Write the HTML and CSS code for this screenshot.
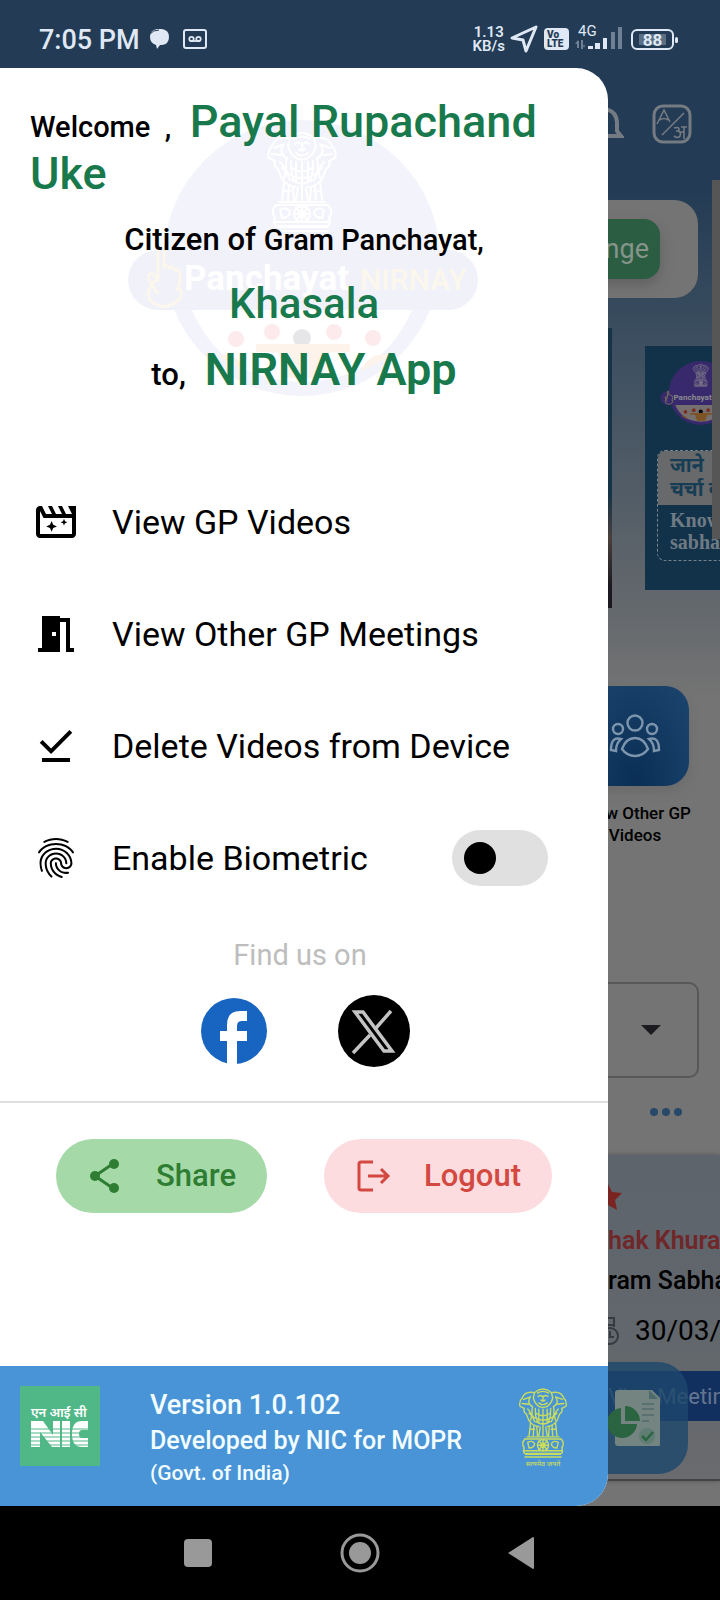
FILE: index.html
```html
<!DOCTYPE html>
<html lang="en">
<head>
<meta charset="utf-8">
<meta name="viewport" content="width=device-width, initial-scale=1">
<title>NIRNAY App</title>
<link rel="stylesheet" href="styles.css">
</head>
<body>
<svg class="defs" aria-hidden="true">
  <symbol id="emblem" viewBox="0 0 72 104">
    <g fill="none" stroke="currentColor" stroke-width="2" stroke-linecap="round">
      <path d="M24 8q12-10 24 0l2 8q-2 8-8 12q-6 3-12 0q-6-4-8-12zM28 9q8-5 16 0M29 14q3-3 6 0M37 14q3-3 6 0M33 19q3 3 6 0M30 23q6 5 12 0M36 13v6"/>
      <path d="M22 8q-12-2-16 8q-5 5-3 12l6 3q-2 5 3 8l4 10q6 8 14 8M50 8q12-2 16 8q5 5 3 12l-6 3q2 5-3 8l-4 10q-6 8-14 8"/>
      <path d="M8 18l8-3M6 24l9 1M18 14q-6 8 2 14M64 18l-8-3M66 24l-9 1M54 14q6 8-2 14M14 32q8 8 4 16M58 32q-8 8-4 16M21 28q-3 12 3 22M51 28q3 12-3 22M25 31q-1 10 3 20M47 31q1 10-3 20M30 32v20M42 32v20M36 32v24M26 38q10 7 20 0M23 44q13 8 26 0M26 50q10 7 20 0M16 38l6 5M56 38l-6 5"/>
      <path d="M18 52l-2 18M23 55l-1 15M27 57l1 13M32 58l-2 12M36 57v13M40 58l2 12M45 57l-1 13M49 55l1 15M54 52l2 18M18 61h6M48 61h6M13 72h46M10 75h52"/>
      <path d="M10 75q-6 6-1 13q-3 6 2 9h50q5-3 2-9q5-7-1-13M14 80q7-4 10 2q-1 6-8 6zM58 80q-7-4-10 2q1 6 8 6zM9 92h54M12 96h48M10 101h52"/>
      <circle cx="36" cy="84" r="8"/><circle cx="36" cy="84" r="3"/><path d="M36 76v16M28 84h16M30 78l12 12M42 78L30 90"/>
    </g>
  </symbol>
  <symbol id="app-logo" viewBox="0 0 350 276">
    <circle class="logo-disc" cx="174" cy="138" r="138"/>
    <path class="logo-bowl" d="M64 190h220q-30 70-110 72q-80-2-110-72z"/>
    <rect class="logo-pill" y="130" width="350" height="60" rx="30"/>
    <use class="logo-emblem" href="#emblem" x="137" y="10" width="74" height="104"/>
    <path class="logo-hand" d="M30 174l-9-14q-2-7 4-6l5 5v-28q3-5 6 0v16q3-3 5 1q4-2 6 2q5-1 5 4v8l-3 9M30 158q-14 12-8 22q13 13 29 0q4-4 1-12"/>
    <text class="logo-word" x="56" y="170">Panchayat</text>
    <text class="logo-name" x="232" y="170">NIRNAY</text>
    <g class="logo-people"><circle cx="108" cy="219" r="8"/><circle cx="144" cy="212" r="8"/><circle cx="206" cy="212" r="8"/><circle cx="245" cy="218" r="8"/></g>
    <circle class="logo-lead" cx="174" cy="218" r="9"/>
    <path class="logo-table" d="M128 224h94v8h-20l-8 26h-36l-8-26h-22zM90 236q18-6 28 16M262 236q-20-6-30 16"/>
  </symbol>
</svg>
<div class="phone">
  <header class="status">
    <span class="clock">7:05 PM</span>
    <svg class="chat-icon" viewBox="0 0 22 22"><path fill="currentColor" d="M9 1h5q7 1 7 8t-7 8h-2l-3 4-1-4Q2 15 2 9q0-7 7-8z"/><path d="M2 6q3-4 9-4" fill="none" stroke="#233b54" stroke-width="1"/></svg>
    <svg class="tape-icon" viewBox="0 0 24 22" fill="none" stroke="currentColor" stroke-width="2"><rect x="1" y="2" width="22" height="18" rx="2"/><g stroke-width="1.8"><circle cx="8.500" cy="11" r="2.200"/><circle cx="15.500" cy="11" r="2.200"/><path d="M8 13h8"/></g></svg>
    <span class="status-gap"></span>
    <span class="speed">1.13<br>KB/s</span>
    <svg class="nav-arrow" viewBox="0 0 28 28"><path d="M26 2L2 13l11 2 3 11z" fill="none" stroke="currentColor" stroke-width="3" stroke-linejoin="round"/></svg>
    <span class="volte">Vo<br>LTE</span>
    <span class="signal"><span class="net">4G</span>
      <svg viewBox="0 0 48 24"><g fill="currentColor"><path d="M13 20h5v3h-5zM20 17h5v6h-5zM28 12h4v11h-4z"/><path opacity=".4" d="M36 6h4v17h-4zM43 1h4v22h-4zM2 15h2v7H2zM0 18l3-4 1 4zM6 14h2v9H6zM10 19h-2l1 3z"/></g></svg></span>
    <span class="battery">88</span>
  </header>

  <div class="stage">
    <main class="page">
      <div class="appbar">
        <svg class="bell" viewBox="0 0 16 36" fill="none" stroke="currentColor" stroke-width="4"><path d="M-10 29V16Q-8 4 0 4q8 2 9 12v9l4 5h-26"/></svg>
        <svg class="lang" viewBox="0 0 40 40" fill="none" stroke="currentColor"><rect x="2" y="2" width="36" height="36" rx="9" stroke-width="3"/><path stroke-width="1.600" d="M10 31L32 9M5 20l7-14 6 12M8 16q4-3 8 0"/><path stroke-width="1.600" d="M22 24q6-2 5 3h-3q6 0 4 5-2 3-6 0M28 28h4M32 23v12M29 23h6"/></svg>
      </div>
      <div class="search-card"><button class="change">nge</button></div>
      <div class="carousel">
        <div class="slide-prev"></div>
        <div class="slide">
          <svg class="mini-logo" viewBox="0 0 350 276"><use href="#app-logo"/></svg>
          <div class="promo"><p class="promo-hi">जाने<br>चर्चा के</p><p class="promo-en">Know<br>sabha</p></div>
        </div>
      </div>
      <button class="tile" aria-label="View Other GP Videos">
        <svg viewBox="0 0 52 44" fill="none" stroke="currentColor" stroke-width="2.400"><circle cx="26" cy="9" r="7.500"/><circle cx="9" cy="15" r="5"/><circle cx="43" cy="15" r="5"/><path d="M26 24q9 0 13 11-5 7-13 7t-13-7q4-11 13-11zM12 25Q2 22 2 36l5 1q0-8 5-12zM40 25q10-3 10 11l-5 1q0-8-5-12z"/></svg>
      </button>
      <p class="tile-label">View Other GP<br>Videos</p>
      <button class="picker" aria-label="Choose meeting"><span class="caret"></span></button>
      <div class="dots"><i></i><i></i><i></i></div>
      <article class="meeting">
        <svg class="star" viewBox="0 0 14 28"><path fill="currentColor" d="M0 1l4 8 10 1-7 7 2 10-9-5z"/></svg>
        <p class="person">hak Khura</p>
        <p class="kind">ram Sabha</p>
        <p class="date"><svg viewBox="0 0 11 30" fill="none" stroke="currentColor" stroke-width="2"><path d="M0 2h6v9M0 9h6"/><circle cx="2" cy="20" r="8"/><path d="M2 15v6h4"/></svg><span>30/03/</span></p>
        <button class="view"><span>Vi</span><span>Meetin</span></button>
      </article>
      <div class="fab">
        <svg viewBox="0 0 52 58"><path d="M10 1h34l9 9v44q0 3-3 3H10q-3 0-3-3V4q0-3 3-3z" fill="#748481"/><path d="M41 1l9 9h-9z" fill="#4d6a6e"/><path d="M34 15h12M34 20h12M34 26h12M34 32h7" stroke="#5a7170" stroke-width="2"/><path d="M13 19v16h16a15 15 0 1 1-16-16z" fill="#2b6440"/><path d="M17 17a15 15 0 0 1 15 15H17z" fill="#2b6440"/><circle cx="39" cy="47" r="8" fill="#5f7d72"/><path d="M34 47l4 4 7-8" fill="none" stroke="#2b6440" stroke-width="2.500"/></svg>
      </div>
      <div class="scrollbar"></div>
    </main>

    <aside class="drawer">
      <section class="greeting">
        <svg class="watermark" viewBox="0 0 350 276" aria-hidden="true"><use href="#app-logo"/></svg>
        <h1 class="welcome"><span class="hello">Welcome&nbsp; ,&nbsp;</span> Payal Rupachand Uke</h1>
        <p class="citizen">Citizen of <span>Gram Panchayat,</span></p>
        <p class="village">Khasala</p>
        <p class="to-app"><span>to,&nbsp;</span> NIRNAY App</p>
      </section>
      <nav class="menu">
        <a class="row" href="#videos"><svg viewBox="0 0 24 24"><path d="M18 4l2 4h-3l-2-4h-2l2 4h-3l-2-4H8l2 4H7L5 4H4c-1.100 0-2 .9-2 2v12c0 1.100.9 2 2 2h16c1.100 0 2-.9 2-2V4h-4zm2 14H4V6.470L5.760 10H20v8zM9.800 11.500l.8 1.900 1.900.8-1.900.8-.8 1.900-.8-1.900-1.900-.8 1.900-.8zM16 10.400l.5 1.200 1.200.5-1.200.5-.5 1.200-.5-1.200-1.200-.5 1.200-.5z"/></svg>View GP Videos</a>
        <a class="row" href="#meetings"><svg viewBox="0 0 24 24"><path d="M14 6v15H3v-2h2V3h9v1h5v15h2v2h-4V6h-3zm-4 5v2h2v-2h-2z"/></svg>View Other GP Meetings</a>
        <a class="row" href="#delete"><svg viewBox="0 0 24 24"><path d="M20.130 5.410 18.720 4l-9.190 9.190-4.250-4.240-1.410 1.410 5.660 5.660zM5 18h14v2H5z"/></svg>Delete Videos from Device</a>
        <label class="row"><svg viewBox="0 0 24 24"><path d="M17.810 4.470c-.08 0-.16-.02-.23-.06C15.660 3.420 14 3 12.010 3c-1.980 0-3.860.47-5.570 1.410-.24.13-.54.04-.68-.2-.13-.24-.04-.55.2-.68C7.820 2.520 9.860 2 12.010 2c2.130 0 3.990.47 6.030 1.520.25.13.34.43.21.67-.09.18-.26.28-.44.28zM3.500 9.720c-.1 0-.2-.03-.29-.09-.23-.16-.28-.47-.12-.7.99-1.400 2.250-2.500 3.750-3.270C9.980 4.040 14 4.030 17.150 5.650c1.500.77 2.760 1.860 3.750 3.250.16.22.11.54-.12.7-.23.16-.54.11-.7-.12-.9-1.260-2.040-2.250-3.390-2.940-2.870-1.470-6.540-1.470-9.400.01-1.360.7-2.500 1.700-3.400 2.960-.08.14-.23.21-.39.21zm6.250 12.070c-.13 0-.26-.05-.35-.15-.87-.87-1.340-1.430-2.010-2.640-.69-1.230-1.050-2.730-1.050-4.340 0-2.970 2.540-5.390 5.660-5.390s5.660 2.420 5.660 5.390c0 .28-.22.5-.5.5s-.5-.22-.5-.5c0-2.420-2.090-4.390-4.660-4.390-2.570 0-4.660 1.970-4.660 4.390 0 1.440.32 2.770.93 3.850.64 1.150 1.080 1.640 1.850 2.420.19.2.19.51 0 .71-.11.1-.24.15-.37.15zm7.170-1.850c-1.190 0-2.240-.3-3.100-.89-1.490-1.010-2.380-2.650-2.380-4.390 0-.28.22-.5.5-.5s.5.22.5.5c0 1.410.72 2.740 1.940 3.560.71.48 1.540.71 2.540.71.24 0 .64-.03 1.040-.1.27-.05.53.13.58.41.05.27-.13.53-.41.58-.57.11-1.070.12-1.210.12zM14.910 22c-.04 0-.09-.01-.13-.02-1.590-.44-2.630-1.030-3.720-2.100-1.400-1.390-2.170-3.240-2.170-5.220 0-1.620 1.380-2.940 3.080-2.940 1.700 0 3.080 1.320 3.080 2.940 0 1.070.93 1.940 2.080 1.940s2.080-.87 2.080-1.940c0-3.770-3.250-6.830-7.250-6.830-2.840 0-5.440 1.580-6.610 4.030-.39.81-.59 1.760-.59 2.800 0 .78.07 2.010.67 3.610.1.26-.03.55-.29.64-.26.1-.55-.04-.64-.29-.49-1.310-.73-2.610-.73-3.960 0-1.200.23-2.290.68-3.240 1.330-2.790 4.280-4.600 7.510-4.600 4.550 0 8.250 3.510 8.250 7.830 0 1.620-1.380 2.940-3.080 2.940s-3.080-1.320-3.080-2.940c0-1.070-.93-1.940-2.080-1.940s-2.080.87-2.080 1.940c0 1.710.66 3.310 1.870 4.510.95.94 1.860 1.460 3.270 1.850.27.07.42.35.35.61-.05.23-.26.38-.47.38z"/></svg><span class="row-text">Enable Biometric</span><input class="switch" type="checkbox" role="switch"></label>
      </nav>
      <p class="find">Find us on</p>
      <div class="social">
        <a href="#facebook" aria-label="Facebook"><svg viewBox="0 0 72 72"><circle cx="36" cy="36" r="33" fill="#1765c0"/><path fill="#fff" d="M29 70V46h-7V36h7v-6q0-14 13-14h7v10h-5q-5 0-5 5v5h10v10H39v24z"/></svg></a>
        <a href="#x" aria-label="X"><svg viewBox="0 0 72 72"><circle cx="36" cy="36" r="36"/><g fill="none" stroke="#c4c4c4" stroke-width="3.500"><path d="M17 17h8l29 39h-8z"/><path d="M53 16L38 33M32 40L15 58"/></g></svg></a>
      </div>
      <hr class="rule">
      <div class="actions">
        <button class="pill share"><svg viewBox="0 0 36 36" fill="currentColor"><path d="M27 5L8 18l19 13" fill="none" stroke="currentColor" stroke-width="3"/><circle cx="27" cy="6" r="5"/><circle cx="8" cy="18" r="5"/><circle cx="27" cy="30" r="5"/></svg>Share</button>
        <button class="pill logout"><svg viewBox="0 0 36 36" fill="none" stroke="currentColor" stroke-width="3"><path d="M18 4H6q-2 0-2 2v24q0 2 2 2h12M13 18h20M26 11l7 7-7 7"/></svg>Logout</button>
      </div>
      <footer class="about">
        <svg class="nic" viewBox="0 0 80 80"><rect width="80" height="80" fill="#50b787"/><text x="11" y="31" class="nic-hi">एन आई सी</text><g fill="#fff"><path d="M11 35h12l10 14V35h7v26h-8L20 46v15h-9zM42 35h8v26h-8zM68 35v9h-6q-3 0-3 4t3 4h6v9h-6q-10 0-10-13t10-13z"/></g><path stroke="#50b787" stroke-width="1.200" d="M10 43h60M10 47h60M10 51h60M10 55h60M10 59h60"/></svg>
        <div class="about-text"><p class="version">Version 1.0.102</p><p class="dev">Developed by NIC for MOPR</p><p class="govt">(Govt. of India)</p></div>
        <div class="seal"><svg viewBox="0 0 72 104"><use href="#emblem"/></svg><span>सत्यमेव जयते</span></div>
      </footer>
    </aside>
  </div>

  <nav class="navbar">
    <button aria-label="Recent apps"><svg viewBox="0 0 40 40"><rect x="6" y="6" width="28" height="28" rx="4"/></svg></button>
    <button aria-label="Home"><svg viewBox="0 0 40 40"><circle cx="20" cy="20" r="11"/><circle cx="20" cy="20" r="18" fill="none" stroke="#999" stroke-width="3"/></svg></button>
    <button aria-label="Back"><svg viewBox="0 0 40 40"><path d="M6 20L31 4q1 0 1 1v30q0 1-1 1z"/></svg></button>
  </nav>
</div>
</body>
</html>
```
FILE: styles.css
```css
* { box-sizing: border-box; }
body { margin: 0; background: #000; font-family: Roboto, "Noto Sans", sans-serif; color: #000; }
h1, p, hr { margin: 0; }
button { border: 0; padding: 0; font: inherit; color: inherit; background: none; }
a { color: inherit; text-decoration: none; }
svg { display: block; flex: none; }
.defs { position: absolute; width: 0; height: 0; }

.phone { --drawer: min(608px, 85vw); min-height: 100vh; display: flex; flex-direction: column; overflow: hidden; }

.status { height: 68px; padding: 10px 46px 0 39px; display: flex; align-items: center; background: #233b54; color: #dfe8f4; }
.clock { font-size: 27px; font-weight: 500; line-height: 32px; padding-top: 2px; }
.chat-icon { width: 22px; height: 22px; margin-left: 8px; }
.tape-icon { width: 24px; height: 22px; margin-left: 13px; }
.status-gap { flex: 1; }
.speed { font-size: 15px; line-height: 14px; font-weight: 600; text-align: center; }
.nav-arrow { width: 28px; height: 28px; margin-left: 5px; }
.volte { margin-left: 6px; width: 25px; height: 22px; padding: 2px 3px; border-radius: 4px; background: #dfe8f4; color: #233b54; font-size: 10px; line-height: 9px; font-weight: 900; }
.signal { position: relative; margin-left: 6px; width: 48px; height: 26px; }
.signal svg { width: 48px; height: 24px; }
.net { position: absolute; top: -3px; left: 3px; font-size: 15px; line-height: 16px; }
.battery { position: relative; margin-left: 8px; width: 43px; height: 21px; border: 2px solid #dfe8f4; border-radius: 6px; font-size: 17px; line-height: 18px; font-weight: 700; text-align: center; background: linear-gradient(#5c7085, #5c7085) center / 27px 11px no-repeat; }
.battery::after { content: ""; position: absolute; right: -6px; top: 6px; width: 3px; height: 6px; border-radius: 2px; background: #dfe8f4; }

.stage { flex: 1; display: grid; }
.page, .drawer { grid-area: 1 / 1; min-width: 0; }

.page { position: relative; padding-left: var(--drawer); overflow: hidden; background: linear-gradient(#233b54 0, #233b54 120px, #3a4d5f 260px, #62676c 530px, #747474 630px); }
.appbar { height: 112px; padding: 0 28px 0 0; display: flex; align-items: center; justify-content: space-between; color: #747b82; }
.bell { width: 16px; height: 36px; }
.lang { width: 40px; height: 40px; }
.search-card { margin: 20px 22px 0 -60px; height: 98px; padding: 19px 38px; display: flex; justify-content: flex-end; border-radius: 24px; background: #747474; }
.change { width: 112px; height: 60px; padding-right: 11px; border-radius: 16px; background: #2b5d43; color: #85958a; font-size: 27px; text-align: right; box-shadow: 0 6px 12px #5559; }
.carousel { margin-top: 30px; height: 280px; display: flex; gap: 33px; }
.slide-prev { width: 4px; background: linear-gradient(#173347 60%, #4a403c 75%, #1c1a20 92%); }
.slide { flex: 1; min-width: 0; margin: 18px 0; padding: 15px 0 0 12px; background: #12324a; overflow: hidden; }
.mini-logo { width: 82px; height: 64px; margin-left: 3px; --disc: #37296c; --pill: #37296c; --bowl: #75706f; --ink: #8b8a90; --name: #8b8a50; --people: #7a2c20; --lead: #000; --table: #7d5425; }
.promo { margin-top: 25px; width: 160px; border: 1px dashed #77828a; border-radius: 8px; overflow: hidden; }
.promo p { padding-left: 12px; }
.promo-hi { height: 54px; padding-top: 2px; background: #68696b; color: #173d55; font: bold 20px/24px "Noto Sans", "Noto Sans Devanagari", sans-serif; }
.promo-en { height: 55px; padding-top: 4px; color: #6f7b84; font: bold 20px/22px "Liberation Serif", serif; }
.tile { margin: 78px 0 0 -27px; width: 108px; height: 100px; display: flex; align-items: center; justify-content: center; border-radius: 24px; background: radial-gradient(ellipse at 50% 100%, #0a2e56, #1c456d); color: #7c95ad; box-shadow: 0 6px 10px #6668; }
.tile svg { width: 52px; height: 44px; }
.tile-label { margin: 16px 0 0 -27px; width: 108px; text-align: center; font-size: 17px; line-height: 22px; font-weight: 500; white-space: nowrap; }
.picker { margin: 136px 21px 0 -300px; width: calc(100% + 279px); height: 96px; padding-right: 36px; display: flex; align-items: center; justify-content: flex-end; border: 2px solid #585858; border-radius: 10px; }
.caret { border: 10px solid transparent; border-top-color: #1c1b20; border-bottom: 0; }
.dots { margin: 30px 38px 0 0; display: flex; gap: 4px; justify-content: flex-end; }
.dots i { width: 8px; height: 8px; border-radius: 50%; background: #27486a; }
.meeting { margin: 39px 0 0 -200px; padding: 28px 0 58px 200px; background: linear-gradient(#5d646c, #62676c 60%, #6a6b6e); border-bottom: 2px solid #444; white-space: nowrap; box-shadow: 0 0 4px #555; }
.star { width: 14px; height: 28px; color: #7a2320; }
.person { margin-top: 14px; font-size: 25px; line-height: 32px; font-weight: 600; color: #70272a; }
.kind { margin-top: 8px; font-size: 25px; line-height: 32px; font-weight: 500; }
.date { margin-top: 14px; display: flex; align-items: center; gap: 16px; font-size: 28px; line-height: 40px; }
.date svg { width: 11px; height: 30px; color: #36393d; }
.view { margin-top: 20px; margin-left: -100px; padding-left: 100px; width: 320px; height: 50px; display: flex; align-items: center; gap: 30px; background: #12305f; color: #66758f; font-size: 22px; }
.fab { position: absolute; right: 32px; bottom: 32px; width: 112px; height: 112px; padding-right: 28px; display: flex; align-items: center; justify-content: flex-end; border-radius: 30px; background: #1d476dcc; }
.fab svg { width: 52px; height: 58px; }
.scrollbar { position: absolute; right: 0; top: 112px; width: 8px; height: 359px; background: #565656; }

.drawer { position: relative; width: var(--drawer); display: flex; flex-direction: column; background: #fff; border-radius: 0 32px 32px 0; overflow: hidden; }
.greeting { position: relative; padding: 28px 30px 0; text-align: center; color: #000; }
.greeting > * { position: relative; }
.greeting > .watermark { position: absolute; left: 128px; top: 52px; width: 350px; height: 276px; --disc: #f3f3fb; --pill: #f1f1fa; --bowl: #fff; --ink: #fff; --name: #fbf7ec; --people: #fdeaec; --lead: #e6e6e8; --table: #fdf3ea; }
.logo-disc { fill: var(--disc); }
.logo-bowl { fill: var(--bowl); }
.logo-pill { fill: var(--pill); }
.logo-emblem { color: var(--ink); }
.logo-hand { fill: none; stroke: var(--name); stroke-width: 3px; }
.logo-word { fill: var(--ink); font-size: 35px; font-weight: 700; }
.logo-name { fill: var(--name); font-size: 30px; font-weight: 500; }
.logo-people { fill: var(--people); }
.logo-lead { fill: var(--lead); }
.logo-table { fill: var(--table); }
.welcome { font-size: 45px; line-height: 52px; font-weight: 500; color: #18794c; text-align: left; }
.hello { font-size: 29px; line-height: 1; color: #000; }
.citizen { margin-top: 20px; font-size: 31px; line-height: 40px; font-weight: 500; }
.citizen span { font-size: 29px; line-height: 1; }
.village { margin-top: 14px; font-size: 42px; line-height: 60px; font-weight: 500; color: #18794c; }
.to-app { margin-top: 6px; font-size: 45px; line-height: 60px; font-weight: 600; color: #18794c; }
.to-app span { font-size: 31px; line-height: 1; font-weight: 500; color: #000; }

.menu { margin-top: 66px; }
.row { height: 112px; padding: 0 60px 0 32px; display: flex; align-items: center; gap: 32px; font-size: 34px; line-height: 40px; white-space: nowrap; }
.row svg { width: 48px; height: 48px; }
.row-text { flex: 1; }
.switch { appearance: none; margin: 0; width: 96px; height: 56px; padding: 12px; border-radius: 28px; background: #e0e0e0; }
.switch::before { content: ""; display: block; width: 32px; height: 32px; border-radius: 50%; background: #000; }
.switch:checked::before { margin-left: auto; }

.find { margin-top: 25px; font-size: 29px; line-height: 32px; text-align: center; color: #bdbdbd; padding-right: 8px; }
.social { margin-top: 24px; display: flex; justify-content: center; gap: 68px; }
.social svg { width: 72px; height: 72px; }
.rule { margin-top: 34px; border: 0; border-top: 2px solid #dedede; }
.actions { margin: 36px 56px 0; display: flex; justify-content: space-between; }
.pill { height: 74px; display: flex; align-items: center; gap: 33px; padding: 0 31px; border-radius: 37px; font-size: 31px; line-height: 36px; font-weight: 500; }
.pill svg { width: 36px; height: 36px; }
.share { background: #a6d9a8; color: #2e7d33; }
.logout { background: #fddcdf; color: #d34840; }

.about { margin-top: auto; height: 140px; padding: 20px 40px 0 20px; display: flex; align-items: flex-start; background: #4994d6; color: #f2fdff; font-weight: 500; }
.nic { width: 80px; height: 80px; }
.nic-hi { fill: #fff; font-size: 13px; font-weight: 600; }
.about-text { flex: 1; margin-left: 50px; white-space: nowrap; }
.version { font-size: 27px; line-height: 38px; }
.dev { font-size: 25px; line-height: 34px; }
.govt { font-size: 21px; line-height: 30px; }
.seal { display: flex; flex-direction: column; align-items: center; color: #c9dc5e; }
.seal svg { width: 50px; height: 74px; }
.seal span { font-size: 7px; line-height: 9px; }

.navbar { height: 94px; padding: 0 178px; display: flex; align-items: center; justify-content: space-between; background: #000; }
.navbar svg { width: 40px; height: 40px; fill: #999; }
```
